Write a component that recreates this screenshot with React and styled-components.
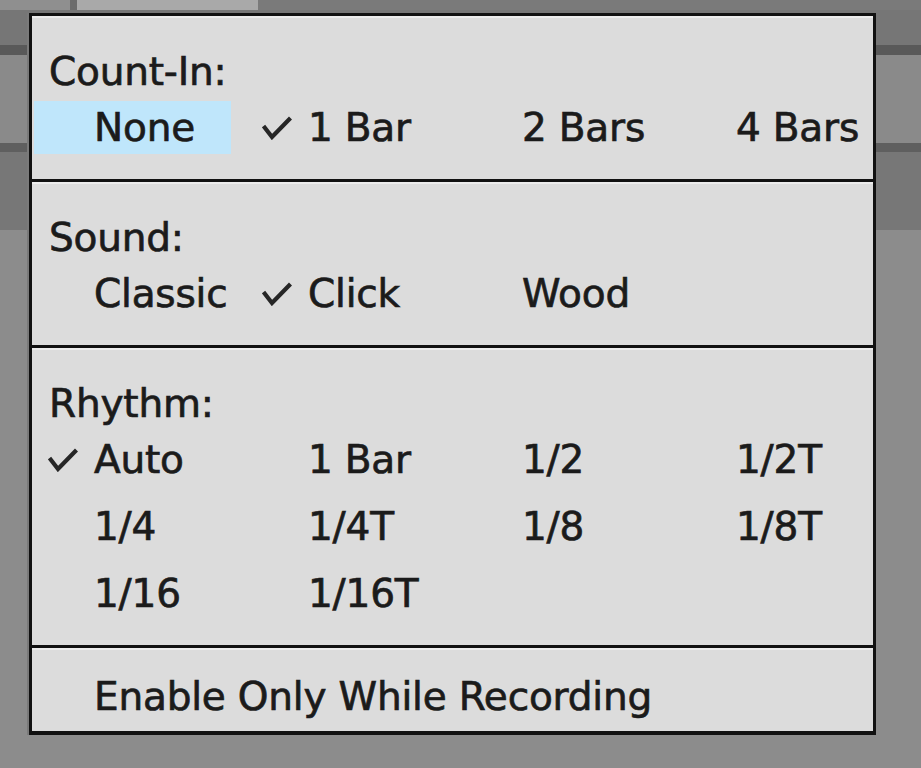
import React from 'react'
import styled, { createGlobalStyle } from 'styled-components'

const GlobalStyle = createGlobalStyle`
    html, body {
        margin: 0;
        padding: 0;
        background: #8c8c8c;
    }
    * {
        box-sizing: border-box;
    }
`

const countIn = [
    { label: 'None', hover: true },
    { label: '1 Bar', checked: true },
    { label: '2 Bars' },
    { label: '4 Bars' },
]

const sounds = [
    { label: 'Classic' },
    { label: 'Click', checked: true },
    { label: 'Wood' },
]

const rhythms = [
    { label: 'Auto', checked: true },
    { label: '1 Bar' },
    { label: '1/2' },
    { label: '1/2T' },
    { label: '1/4' },
    { label: '1/4T' },
    { label: '1/8' },
    { label: '1/8T' },
    { label: '1/16' },
    { label: '1/16T' },
]

const Check = () => (
    <svg width="30" height="24" viewBox="0 0 30 24">
        <polyline points="1.5,10 10,21 28.5,2" fill="none" stroke="#262626" strokeWidth="4.2" />
    </svg>
)

const Option = ({ label, checked, hover }) => (
    <Item $hover={hover}>
        <CheckSlot>{checked && <Check />}</CheckSlot>
        {label}
    </Item>
)

const App = () => {
    return (
        <Page>
            <GlobalStyle />

            {/* track rows behind the popup */}
            <TopStrip>
                <Segment $w={70} $c="#8f8f8f" />
                <Segment $w={7} $c="#6b6b6b" />
                <Segment $w={181} $c="#a9a9a9" />
                <Segment $grow $c="#7a7a7a" />
            </TopStrip>
            <Band $h={35} $c="#767676" />
            <Band $h={10} $c="#595959" />
            <Band $h={88} $c="#8a8a8a" />
            <Band $h={9} $c="#5f5f5f" />
            <Band $h={78} $c="#777777" />
            <Band $grow $c="#8c8c8c" />

            <Menu>
                <Section>
                    <Label>Count-In:</Label>
                    <Options>
                        {countIn.map((o) => <Option key={o.label} {...o} />)}
                    </Options>
                </Section>
                <Section>
                    <Label>Sound:</Label>
                    <Options>
                        {sounds.map((o) => <Option key={o.label} {...o} />)}
                    </Options>
                </Section>
                <Section>
                    <Label>Rhythm:</Label>
                    <Options>
                        {rhythms.map((o) => <Option key={o.label} {...o} />)}
                    </Options>
                </Section>
                <Section $footer>
                    <Options>
                        <Wide>
                            <Option label="Enable Only While Recording" />
                        </Wide>
                    </Options>
                </Section>
            </Menu>
        </Page>
    )
}

const Page = styled.div`
    position: relative;
    width: 921px;
    height: 768px;
    overflow: hidden;
    display: flex;
    flex-direction: column;
    font-family: 'DejaVu Sans', 'Liberation Sans', sans-serif;
`

const TopStrip = styled.div`
    display: flex;
    height: 10px;
`

const Segment = styled.div`
    width: ${(p) => (p.$w ? `${p.$w}px` : 'auto')};
    flex: ${(p) => (p.$grow ? 1 : 'none')};
    background: ${(p) => p.$c};
`

const Band = styled.div`
    height: ${(p) => (p.$h ? `${p.$h}px` : 'auto')};
    flex: ${(p) => (p.$grow ? 1 : 'none')};
    background: ${(p) => p.$c};
`

const Menu = styled.div`
    position: absolute;
    left: 29px;
    top: 13px;
    width: 847px;
    border: 3px solid #111111;
    border-bottom-width: 4px;
    background: #dcdcdc;
    color: #1b1b1b;
    font-size: 39px;
    letter-spacing: -0.2px;
    -webkit-text-stroke: 0.7px #1b1b1b;
    box-shadow: -2px 0 0 #7a7a7a;
`

const Section = styled.div`
    padding: ${(p) => (p.$footer ? '22px 0 8px' : '29px 0 25px')};
    box-shadow: inset 0 2px 0 #ececec;

    & + & {
        border-top: 3px solid #111111;
    }
`

const Label = styled.div`
    height: 53px;
    line-height: 53px;
    padding-left: 17px;
    margin-bottom: 3px;
    white-space: nowrap;
`

const Options = styled.div`
    display: grid;
    grid-template-columns: repeat(4, 197px);
    column-gap: 17px;
    row-gap: 14px;
    padding-left: 2px;
`

const Wide = styled.div`
    grid-column: 1 / -1;
`

const Item = styled.div`
    display: flex;
    align-items: center;
    height: 53px;
    padding-left: 14px;
    white-space: nowrap;
    background: ${(p) => (p.$hover ? '#bfe6fb' : 'transparent')};
`

const CheckSlot = styled.span`
    display: flex;
    align-items: center;
    width: 46px;
    height: 24px;
    flex: none;
`

export default App
